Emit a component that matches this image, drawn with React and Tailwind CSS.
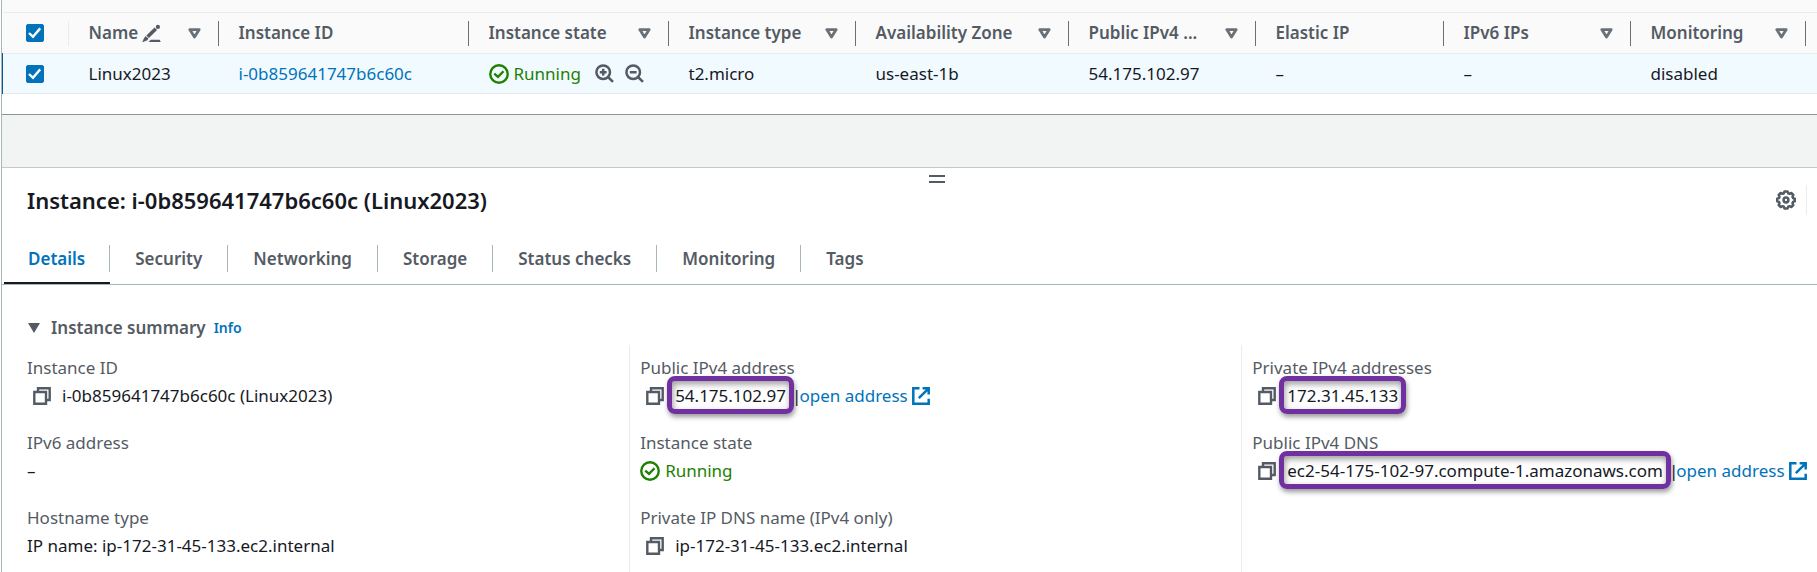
import React from "react";

function Check({ label }) {
  return (
    <span className="relative block h-[18px] w-[18px]">
      <input
        type="checkbox"
        defaultChecked
        aria-label={label}
        className="peer block h-[18px] w-[18px] appearance-none rounded-xs border border-[#687078] bg-white checked:border-[#0073bb] checked:bg-[#0073bb]"
      />
      <svg
        viewBox="0 0 18 18"
        className="pointer-events-none absolute inset-0 hidden h-[18px] w-[18px] peer-checked:block"
        fill="none"
        stroke="#fff"
        strokeWidth="2.4"
      >
        <path d="M3 9l4 3.8 7.2-8.4" />
      </svg>
    </span>
  );
}

function SortIcon() {
  return (
    <svg width="13" height="11" viewBox="0 0 13 11" fill="none" stroke="#687078" strokeWidth="2.8" strokeLinejoin="round">
      <path d="M1.8 1.6h9.4L6.5 9.1z" />
    </svg>
  );
}

function EditIcon() {
  return (
    <svg width="19" height="19" viewBox="0 0 19 19" fill="#545b64">
      <path d="M4.4 11.4L12.5 3.6l2.6 2.5-8.2 8z" />
      <circle cx="15.9" cy="2.9" r="2.1" />
      <path d="M3.8 12.1l2.7 2.7-1.6 1.7L.2 18.3l1.9-4.4z" />
      <path d="M8.8 15.8h8.8l1.2 2.3H6.6z" />
    </svg>
  );
}

function StatusIcon() {
  return (
    <svg width="20" height="20" viewBox="0 0 16 16" fill="none" stroke="#1d8102" strokeWidth="1.9" className="shrink-0">
      <circle cx="8" cy="8" r="7" />
      <path d="M4.2 7.7l3 2.6 4.4-4.5" />
    </svg>
  );
}

function ZoomIcon({ plus }) {
  return (
    <svg width="19" height="19" viewBox="0 0 19 19" fill="none" stroke="#545b64" strokeWidth="2.5">
      <circle cx="8.2" cy="8.2" r="6.8" />
      <path d="M13 13l5 4.8M4.8 8.2h6.8" />
      {plus && <path d="M8.2 4.8v6.8" />}
    </svg>
  );
}

function CopyIcon() {
  return (
    <svg width="18" height="18" viewBox="0 0 18 18" fill="none" stroke="#545b64" strokeWidth="2.4">
      <path d="M1.3 5h11.7v11.7H1.3zM5 5V1.3h11.7V13H13" />
    </svg>
  );
}

function ExternalIcon() {
  return (
    <svg width="18" height="18" viewBox="0 0 18 18" fill="none" stroke="#0073bb" strokeWidth="2.5">
      <path d="M7.5 1.3H1.3v15.4h15.4v-5M10.6 1.3h6.1v6.1M16.4 1.6L6.8 11.2" />
    </svg>
  );
}

function GearIcon() {
  return (
    <svg width="20" height="20" viewBox="0 0 20 20" fill="none" stroke="#545b64" strokeWidth="2.5" strokeLinejoin="round">
      <path d="M8.5 1.4h3l.7 1.9 1.3.5 1.8-.8 2 2-.8 1.8.5 1.3 1.8.6v2.6l-1.8.6-.5 1.3.8 1.8-2 2-1.8-.8-1.3.5-.7 1.9h-3l-.7-1.9-1.3-.5-1.8.8-2-2 .8-1.8-.5-1.3-1.8-.6V8.7l1.8-.6.5-1.3-.8-1.8 2-2 1.8.8 1.3-.5z" />
      <circle cx="10" cy="10" r="2.4" />
    </svg>
  );
}

function Running() {
  return (
    <span className="flex items-center gap-[5px] text-[#1d8102]">
      <StatusIcon />
      Running
    </span>
  );
}

const columns = [
  { name: "Instance ID" },
  { name: "Instance state", sort: true },
  { name: "Instance type", sort: true },
  { name: "Availability Zone", sort: true },
  { name: "Public IPv4 ...", sort: true },
  { name: "Elastic IP" },
  { name: "IPv6 IPs", sort: true },
  { name: "Monitoring", sort: true },
];

function InstancesTable() {
  return (
    <div className="bg-white pb-5">
      <table className="w-full table-fixed border-collapse text-left">
        <colgroup>
          <col className="w-[66px]" />
          <col className="w-[150px]" />
          <col className="w-[250px]" />
          <col className="w-[200px]" />
          <col className="w-[187px]" />
          <col className="w-[213px]" />
          <col className="w-[187px]" />
          <col className="w-[188px]" />
          <col className="w-[187px]" />
          <col className="w-[175px]" />
          <col />
        </colgroup>
        <thead className="border-y border-[#eaeded] bg-[#fafafa] text-[#545b64]">
          <tr className="h-[41px]">
            <th className="p-0">
              <div className="flex h-[25px] items-center border-r border-[#eaeded] pl-[23px]">
                <Check label="Select all instances" />
              </div>
            </th>
            <th className="p-0">
              <div className="flex h-[25px] items-center border-r border-[#687078] pr-[17px] pl-5 font-semibold">
                <span className="flex items-center gap-1">
                  Name
                  <EditIcon />
                </span>
                <button type="button" aria-label="Sort by Name" className="ml-auto">
                  <SortIcon />
                </button>
              </div>
            </th>
            {columns.map((c) => (
              <th key={c.name} className="p-0">
                <div className="flex h-[25px] items-center border-r border-[#687078] pr-[17px] pl-5 font-semibold whitespace-nowrap">
                  {c.name}
                  {c.sort && (
                    <button type="button" aria-label={"Sort by " + c.name} className="ml-auto">
                      <SortIcon />
                    </button>
                  )}
                </div>
              </th>
            ))}
            <td />
          </tr>
        </thead>
        <tbody>
          <tr className="h-10 border-b border-[#e3e9ee] bg-[#f1faff] text-[#16191f]">
            <td className="border-l border-[#0a5a94] p-0 pl-[23px]">
              <Check label="Select Linux2023" />
            </td>
            <td className="p-0 pl-5">Linux2023</td>
            <td className="p-0 pl-5">
              <a href="#instance" className="text-[#0073bb]">
                i-0b859641747b6c60c
              </a>
            </td>
            <td className="p-0 pl-5">
              <div className="flex items-center">
                <Running />
                <button type="button" aria-label="Include Running" className="ml-3.5">
                  <ZoomIcon plus />
                </button>
                <button type="button" aria-label="Exclude Running" className="ml-[11px]">
                  <ZoomIcon />
                </button>
              </div>
            </td>
            <td className="p-0 pl-5">t2.micro</td>
            <td className="p-0 pl-5">us-east-1b</td>
            <td className="p-0 pl-5">54.175.102.97</td>
            <td className="p-0 pl-5">–</td>
            <td className="p-0 pl-5">–</td>
            <td className="p-0 pl-5">disabled</td>
            <td />
          </tr>
        </tbody>
      </table>
    </div>
  );
}

const tabs = ["Details", "Security", "Networking", "Storage", "Status checks", "Monitoring", "Tags"];

function Tabs() {
  return (
    <div role="tablist" className="flex border-b border-[#aab7b8] pl-0.5">
      {tabs.map((t, i) => (
        <button
          key={t}
          type="button"
          role="tab"
          aria-selected={i === 0}
          className={
            i === 0
              ? "border-b-2 border-[#16191f] pb-2.5 font-semibold text-[#0073bb]"
              : "border-b-2 border-transparent pb-2.5 font-semibold text-[#545b64]"
          }
        >
          <span
            className={
              i === 0
                ? "flex h-[27px] items-center border-r border-[#aab7b8] px-6"
                : i === tabs.length - 1
                  ? "flex h-[27px] items-center px-[25px]"
                  : "flex h-[27px] items-center border-r border-[#aab7b8] px-[25px]"
            }
          >
            {t}
          </span>
        </button>
      ))}
    </div>
  );
}

function Field({ label, children }) {
  return (
    <div>
      <dt className="leading-7 text-[#545b64]">{label}</dt>
      <dd className="flex h-7 items-center leading-7 whitespace-nowrap text-[#16191f]">{children}</dd>
    </div>
  );
}

function Copyable({ text, marked }) {
  return (
    <>
      <button type="button" aria-label={"Copy " + text} className="mr-[11px] ml-1.5">
        <CopyIcon />
      </button>
      <span className="relative">
        {text}
        {marked && (
          <span className="pointer-events-none absolute -inset-x-2 -top-1.5 -bottom-1 rounded-lg border-5 border-[#7030a0] shadow-[1px_3px_5px_rgba(0,0,0,0.4),inset_1px_3px_6px_rgba(0,0,0,0.4)]" />
        )}
      </span>
    </>
  );
}

function OpenAddress() {
  return (
    <>
      <span className="ml-1.5">|</span>
      <a href="#open-address" className="-ml-0.5 flex items-center gap-1 text-[#0073bb]">
        open address
        <ExternalIcon />
      </a>
    </>
  );
}

function DetailsPanel() {
  return (
    <section className="w-[103%] border-t border-[#c3c8c8] bg-white">
      <div className="flex justify-center pt-[7px]">
        <button type="button" aria-label="Resize panel" className="flex w-4 flex-col gap-1">
          <span className="h-0.5 w-full bg-[#545b64]" />
          <span className="h-0.5 w-full bg-[#545b64]" />
        </button>
      </div>
      <div className="flex h-[34px] items-center pr-16 pl-[25px]">
        <h2 className="text-[22px] font-semibold text-[#16191f]">Instance: i-0b859641747b6c60c (Linux2023)</h2>
        <div className="ml-auto flex h-[30px] items-center border-r border-[#eaeded] pr-2.5">
          <button type="button" aria-label="Preferences">
            <GearIcon />
          </button>
        </div>
      </div>
      <div className="pt-7">
        <Tabs />
      </div>
      <div className="pt-[27px] pr-[18px] pl-[15px]">
        <div className="mb-px flex h-8 items-center gap-2 pl-[11px]">
          <button type="button" className="flex items-center gap-[11px] font-semibold text-[#545b64]">
            <svg width="12" height="10" viewBox="0 0 12 10" fill="#545b64">
              <path d="M0 0h12L6 10z" />
            </svg>
            Instance summary
          </button>
          <a href="#info" className="text-sm font-semibold text-[#0073bb]">
            Info
          </a>
        </div>
        <div className="grid grid-cols-3">
          <dl className="flex flex-col gap-[19px] pt-[9px] pb-4 pl-2.5">
            <Field label="Instance ID">
              <Copyable text="i-0b859641747b6c60c (Linux2023)" />
            </Field>
            <Field label="IPv6 address">–</Field>
            <Field label="Hostname type">IP name: ip-172-31-45-133.ec2.internal</Field>
          </dl>
          <dl className="flex flex-col gap-[19px] border-l border-[#eaeded] pt-[9px] pb-4 pl-2.5">
            <Field label="Public IPv4 address">
              <Copyable text="54.175.102.97" marked />
              <OpenAddress />
            </Field>
            <Field label="Instance state">
              <Running />
            </Field>
            <Field label="Private IP DNS name (IPv4 only)">
              <Copyable text="ip-172-31-45-133.ec2.internal" />
            </Field>
          </dl>
          <dl className="flex flex-col gap-[19px] border-l border-[#eaeded] pt-[9px] pb-4 pl-2.5">
            <Field label="Private IPv4 addresses">
              <Copyable text="172.31.45.133" marked />
            </Field>
            <Field label="Public IPv4 DNS">
              <Copyable text="ec2-54-175-102-97.compute-1.amazonaws.com" marked />
              <OpenAddress />
            </Field>
          </dl>
        </div>
      </div>
    </section>
  );
}

export default function App() {
  return (
    <main className="ml-px min-h-screen overflow-hidden border-l border-[#aab7b8] bg-white font-['Noto_Sans','Open_Sans',sans-serif] text-[17px] leading-7">
      <div className="h-3 bg-[#fafafa]" />
      <InstancesTable />
      <div className="h-[53px] border-t border-[#879596] bg-[#f2f3f3]" />
      <DetailsPanel />
    </main>
  );
}
